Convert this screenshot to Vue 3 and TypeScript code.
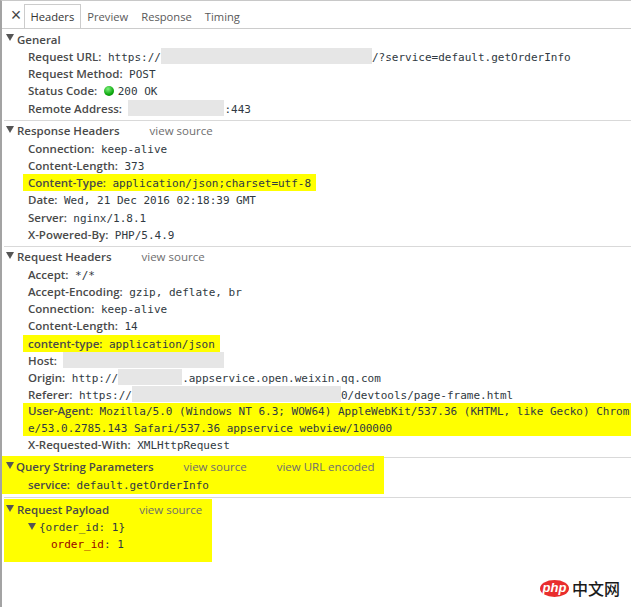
<script setup lang="ts">
interface Part { t?: string; gap?: number }
interface Row { name: string; parts: Part[]; hl?: boolean; wrap?: boolean; dot?: boolean }
interface Section { title: string; links: string[]; rows: Row[]; hl?: boolean }

const tabs = ['Headers', 'Preview', 'Response', 'Timing']

const sections: Section[] = [
  {
    title: 'General',
    links: [],
    rows: [
      { name: 'Request URL:', parts: [{ t: 'https://' }, { gap: 211 }, { t: '/?service=default.getOrderInfo' }] },
      { name: 'Request Method:', parts: [{ t: 'POST' }] },
      { name: 'Status Code:', dot: true, parts: [{ t: '200 OK' }] },
      { name: 'Remote Address:', parts: [{ gap: 96 }, { t: ':443' }] }
    ]
  },
  {
    title: 'Response Headers',
    links: ['view source'],
    rows: [
      { name: 'Connection:', parts: [{ t: 'keep-alive' }] },
      { name: 'Content-Length:', parts: [{ t: '373' }] },
      { name: 'Content-Type:', hl: true, parts: [{ t: 'application/json;charset=utf-8' }] },
      { name: 'Date:', parts: [{ t: 'Wed, 21 Dec 2016 02:18:39 GMT' }] },
      { name: 'Server:', parts: [{ t: 'nginx/1.8.1' }] },
      { name: 'X-Powered-By:', parts: [{ t: 'PHP/5.4.9' }] }
    ]
  },
  {
    title: 'Request Headers',
    links: ['view source'],
    rows: [
      { name: 'Accept:', parts: [{ t: '*/*' }] },
      { name: 'Accept-Encoding:', parts: [{ t: 'gzip, deflate, br' }] },
      { name: 'Connection:', parts: [{ t: 'keep-alive' }] },
      { name: 'Content-Length:', parts: [{ t: '14' }] },
      { name: 'content-type:', hl: true, parts: [{ t: 'application/json' }] },
      { name: 'Host:', parts: [{ gap: 161 }] },
      { name: 'Origin:', parts: [{ t: 'http://' }, { gap: 64 }, { t: '.appservice.open.weixin.qq.com' }] },
      { name: 'Referer:', parts: [{ t: 'https://' }, { gap: 209 }, { t: '0/devtools/page-frame.html' }] },
      {
        name: 'User-Agent:',
        hl: true,
        wrap: true,
        parts: [{ t: 'Mozilla/5.0 (Windows NT 6.3; WOW64) AppleWebKit/537.36 (KHTML, like Gecko) Chrome/53.0.2785.143 Safari/537.36 appservice webview/100000' }]
      },
      { name: 'X-Requested-With:', parts: [{ t: 'XMLHttpRequest' }] }
    ]
  },
  {
    title: 'Query String Parameters',
    hl: true,
    links: ['view source', 'view URL encoded'],
    rows: [{ name: 'service:', parts: [{ t: 'default.getOrderInfo' }] }]
  }
]
</script>

<template>
  <div class="panel">
    <nav class="tabs">
      <span class="close">×</span>
      <span v-for="(tab, i) in tabs" :key="tab" class="tab" :class="{ active: i === 0 }">{{ tab }}</span>
    </nav>

    <section v-for="s in sections" :key="s.title" class="section" :class="{ 'section-hl': s.hl }">
      <h3 class="head">
        <i class="tri"></i>
        <span>{{ s.title }}</span>
        <a v-for="l in s.links" :key="l" class="link">{{ l }}</a>
      </h3>
      <div v-for="r in s.rows" :key="r.name" class="row" :class="{ 'row-hl': r.hl, 'row-full': r.wrap }">
        <b class="name">{{ r.name }}</b>
        <span v-if="r.dot" class="dot"></span>
        <span class="value">
          <template v-for="(p, i) in r.parts" :key="i">
            <span v-if="p.gap" class="redact" :style="{ width: p.gap + 'px' }"></span>
            <template v-else>{{ p.t }}</template>
          </template>
        </span>
      </div>
    </section>

    <section class="payload">
      <h3 class="head">
        <i class="tri"></i>
        <span>Request Payload</span>
        <a class="link">view source</a>
      </h3>
      <div class="tree"><i class="tri small"></i>{order_id: 1}</div>
      <div class="leaf"><span class="key">order_id</span>: 1</div>
    </section>

    <div class="mark">
      <span class="php">php</span>
      <span class="cn">中文网</span>
    </div>
  </div>
</template>

<style>
html, body { margin: 0; background: #fff; }
</style>

<style scoped>
.panel {
  position: relative;
  width: 631px;
  height: 607px;
  box-sizing: border-box;
  border-left: 2px solid #a3a3a3;
  border-top: 1px solid #c8c8c8;
  overflow: hidden;
  font-family: "Open Sans", "Liberation Sans", sans-serif;
  font-size: 11.5px;
  color: #303942;
  background: #fff;
}
.tabs {
  display: flex;
  align-items: flex-end;
  height: 27px;
  border-bottom: 1px solid #ccc;
  padding-left: 6px;
  color: #5a5a5a;
  font-size: 11.2px;
}
.close {
  width: 16px;
  height: 23px;
  line-height: 21px;
  font-size: 18px;
  text-align: center;
  font-family: "Liberation Sans", sans-serif;
  color: #444;
}
.tab {
  padding: 0 5.5px;
  height: 24px;
  line-height: 23px;
  box-sizing: border-box;
  border: 1px solid transparent;
  border-bottom: 0;
}
.active { border-color: #ccc; color: #333; }
.section {
  margin-left: 2px;
  padding-top: 1px;
  padding-bottom: 3px;
  border-bottom: 1px solid #d9d9d9;
}
.section-hl {
  margin-left: 0;
  margin-top: -2px;
  padding-top: 2px;
  padding-bottom: 0;
  border-bottom: 0;
  width: 382px;
  height: 38px;
  background: #ffff00;
  box-sizing: border-box;
}
.section-hl .head { padding-left: 4px; }
.section-hl .row { margin-left: 26px; }
.section-hl::after {
  content: "";
  position: absolute;
  left: 2px;
  right: 0;
  top: 496px;
  height: 1px;
  background: #d9d9d9;
}
.head {
  display: flex;
  align-items: center;
  margin: 0;
  height: 18px;
  padding-left: 2px;
  white-space: nowrap;
  font-size: 11.5px;
  font-weight: 600;
  color: #4a4a4a;
}
.tri {
  width: 0;
  height: 0;
  border-left: 4px solid transparent;
  border-right: 4px solid transparent;
  border-top: 7px solid #555;
  margin-right: 3px;
  margin-bottom: 3px;
  flex: none;
}
.section-hl .tri { margin-right: 2px; }
.tri.small { display: inline-block; margin: 0 3px 1px 0; }
.link { margin-left: 30px; color: #6e6e6e; font-weight: 400; }
.row {
  margin-left: 24px;
  line-height: 17.2px;
  height: 17.2px;
  width: fit-content;
  white-space: nowrap;
}
.row-hl { background: #ffff00; margin-left: 19px; padding: 0 5px; }
.row-full {
  box-sizing: border-box;
  width: 609px;
  height: 33px;
  line-height: 16.5px;
  white-space: normal;
  word-break: break-all;
  padding-right: 0;
}
.name { font-weight: 600; color: #4a4a4a; margin-right: 6.5px; }
.value {
  font-family: "DejaVu Sans Mono", "Liberation Mono", monospace;
  font-size: 11px;
  line-height: 14px;
  color: #303942;
}
.redact {
  display: inline-block;
  height: 16px;
  vertical-align: top;
  background: #e6e6e6;
}
.dot {
  display: inline-block;
  width: 10px;
  height: 10px;
  border-radius: 50%;
  margin-right: 4px;
  vertical-align: -1px;
  background: radial-gradient(circle at 40% 30%, #7ef07e, #0ea80e 60%, #067a06);
}
.payload {
  width: 208px;
  height: 63px;
  margin: 5px 0 0 2px;
  padding-top: 2px;
  box-sizing: border-box;
  background: #ffff00;
}
.payload .tree, .payload .leaf {
  font-family: "DejaVu Sans Mono", "Liberation Mono", monospace;
  font-size: 11px;
  line-height: 17px;
  color: #303942;
}
.tree { padding-left: 24px; }
.leaf { padding-left: 47px; }
.key { color: #990000; }
.mark {
  position: absolute;
  right: 11px;
  bottom: 9px;
  display: flex;
  align-items: center;
  gap: 3px;
  height: 20px;
}
.php {
  width: 29px;
  height: 17px;
  line-height: 15px;
  border-radius: 50%;
  text-align: center;
  background: #e92d2d;
  color: #fff;
  font-family: "Liberation Sans", sans-serif;
  font-style: italic;
  font-weight: 700;
  font-size: 13px;
}
.cn {
  font-family: "Noto Sans CJK SC", sans-serif;
  font-size: 16px;
  font-weight: 500;
  color: #1a1a1a;
  line-height: 20px;
}
</style>
